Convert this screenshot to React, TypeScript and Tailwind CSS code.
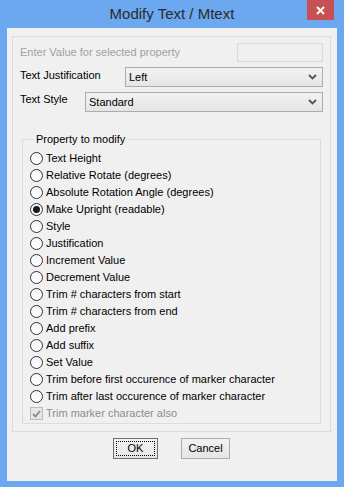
import { useState } from "react";

const OPTIONS = [
  "Text Height",
  "Relative Rotate (degrees)",
  "Absolute Rotation Angle (degrees)",
  "Make Upright (readable)",
  "Style",
  "Justification",
  "Increment Value",
  "Decrement Value",
  "Trim # characters from start",
  "Trim # characters from end",
  "Add prefix",
  "Add suffix",
  "Set Value",
  "Trim before first occurence of marker character",
  "Trim after last occurence of marker character",
];

function Chevron() {
  return (
    <svg width="9" height="6" viewBox="0 0 9 6" className="shrink-0">
      <path d="M1 1 L4.5 4.5 L8 1" fill="none" stroke="#555" strokeWidth="1.8" />
    </svg>
  );
}

function Select({ value, width }: { value: string; width: string }) {
  return (
    <div
      className={`${width} h-[20px] flex items-center justify-between pl-[3px] pr-[5px] border border-[#acacac] bg-gradient-to-b from-[#f2f2f2] to-[#e5e5e5] text-black`}
    >
      <span className="pt-[1px]">{value}</span>
      <Chevron />
    </div>
  );
}

function Radio({ checked }: { checked: boolean }) {
  return (
    <span className="w-[13px] h-[13px] rounded-full border border-[#333] bg-gradient-to-b from-[#f4f4f4] to-white flex items-center justify-center shrink-0">
      {checked && <span className="w-[7px] h-[7px] rounded-full bg-[#1a1a1a]" />}
    </span>
  );
}

export default function App() {
  const [selected, setSelected] = useState(3);

  return (
    <div
      className="w-[344px] h-[487px] bg-[#6ba8f0] flex flex-col text-[11px] leading-[13px] text-black"
      style={{ fontFamily: '"Liberation Sans", Arial, sans-serif' }}
    >
      {/* title bar */}
      <div className="h-[28px] relative flex items-center justify-center">
        <span className="text-[15px] leading-[18px] text-[#2b2b2b] mt-[-1px]">Modify Text / Mtext</span>
        <div className="absolute right-[10px] top-0 w-[27px] h-[20px] bg-[#c75050] flex items-center justify-center">
          <svg width="9" height="9" viewBox="0 0 9 9">
            <path d="M1 1 L8 8 M8 1 L1 8" stroke="white" strokeWidth="2" />
          </svg>
        </div>
      </div>

      {/* client area */}
      <div className="flex-1 mx-[7px] mb-[6px] bg-[#f0f0f0] flex flex-col pt-[8px] px-[5px] pr-[6px]">
        <div className="h-[396px] border border-[#dcdcdc] flex flex-col px-[7px] pt-[6px]">
          <div className="flex items-center justify-between h-[19px]">
            <span className="text-[#a0a0a0]">Enter Value for selected property</span>
            <div className="w-[86px] h-[19px] border border-[#d9d9d9] bg-[#f0f0f0]" />
          </div>

          <div className="flex items-start justify-between mt-[5px]">
            <span className="pt-[2px]">Text Justification</span>
            <Select value="Left" width="w-[198px]" />
          </div>

          <div className="flex items-start justify-between mt-[5px]">
            <span className="pt-[1px]">Text Style</span>
            <Select value="Standard" width="w-[238px]" />
          </div>

          <fieldset className="mt-[21px] mx-[2px] border border-[#dcdcdc] h-[291px] pl-[7px]">
            <legend className="px-[2px] ml-[4px] text-black">Property to modify</legend>
            <div className="flex flex-col pt-[4px]">
              {OPTIONS.map((label, i) => (
                <div
                  key={label}
                  className="h-[17px] flex items-center gap-[3px] cursor-default"
                  onClick={() => setSelected(i)}
                >
                  <Radio checked={selected === i} />
                  <span className="whitespace-nowrap">{label}</span>
                </div>
              ))}
              <div className="h-[17px] flex items-center gap-[3px]">
                <span className="w-[13px] h-[13px] border border-[#bcbcbc] bg-[#e6e6e6] flex items-center justify-center shrink-0">
                  <svg width="9" height="8" viewBox="0 0 9 8">
                    <path d="M1 4 L3.5 6.5 L8 1" fill="none" stroke="#8a8a8a" strokeWidth="1.8" />
                  </svg>
                </span>
                <span className="text-[#8d8d8d]">Trim marker character also</span>
              </div>
            </div>
          </fieldset>
        </div>

        <div className="flex justify-center gap-[23px] mt-[6px]">
          <button className="w-[45px] h-[21px] border border-[#707070] bg-gradient-to-b from-[#f2f2f2] to-[#e5e5e5] p-[2px]">
            <span className="w-full h-full flex items-center justify-center border border-dotted border-black">OK</span>
          </button>
          <button className="w-[49px] h-[21px] border border-[#acacac] bg-gradient-to-b from-[#f2f2f2] to-[#e5e5e5] flex items-center justify-center">
            Cancel
          </button>
        </div>
      </div>
    </div>
  );
}
